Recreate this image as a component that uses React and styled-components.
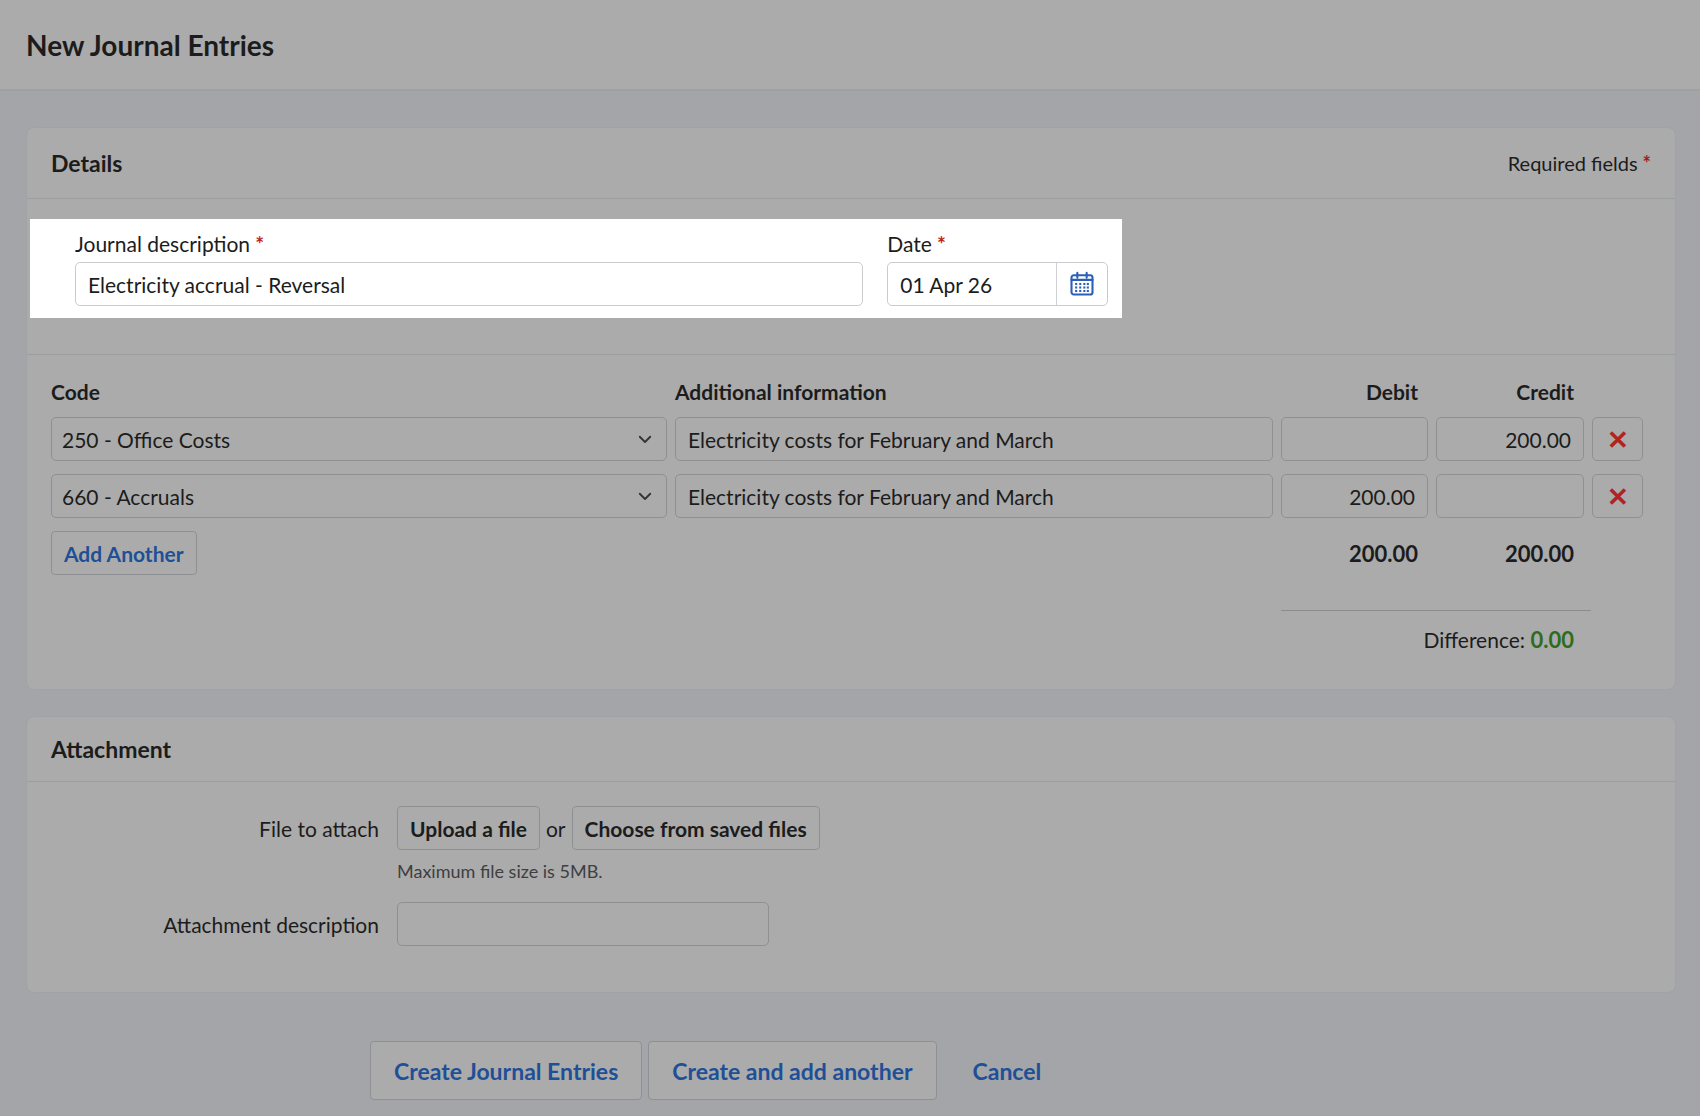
import styled, { createGlobalStyle } from "styled-components";

const Global = createGlobalStyle`
  body { margin: 0; background: #a3a5a8; font-family: "Lato", "Liberation Sans", sans-serif; color: #1c1c1c; }
  * { box-sizing: border-box; }
`;

const Header = styled.div`
  height: 91px; background: #ababab; border-bottom: 2px solid #9ea0a3;
  display: flex; align-items: center; padding: 0 26px;
  font-size: 28px; font-weight: 700;
`;

const Page = styled.div`
  padding: 36px 24px 20px 26px; display: flex; flex-direction: column; gap: 26px;
`;

const Card = styled.div`
  background: #ababab; border: 1px solid #a0a2a5; border-radius: 8px;
`;

const CardHead = styled.div`
  height: ${p => p.$h}px; display: flex; align-items: center; justify-content: space-between;
  padding: 0 24px; border-bottom: 1px solid #9c9ea1;
  font-size: 23px; font-weight: 700;
`;

const Req = styled.span`
  font-size: 20px; font-weight: 400;
  &::after { content: " *"; color: #a3201c; font-weight: 700; }
`;

const Highlight = styled.div`
  background: #fff; margin: 20px 0 0 -21px; width: 1092px; padding: 12px 14px 12px 45px;
  display: flex; gap: 24px;
`;

const Field = styled.div`
  display: flex; flex-direction: column; gap: 6px; width: ${p => p.$w}px;
`;

const Label = styled.label`
  font-size: 21px;
  &::after { content: ${p => (p.$req ? '" *"' : '""')}; color: #c0231e; font-weight: 700; }
`;

const Input = styled.div`
  height: 44px; border: 1px solid ${p => (p.$white ? "#c9cbcf" : "#8e9093")};
  border-radius: 5px; background: ${p => (p.$white ? "#fff" : "#ababab")};
  display: flex; align-items: center; padding: 0 12px; font-size: 21px;
  justify-content: ${p => (p.$right ? "flex-end" : "space-between")};
  width: ${p => (p.$w ? p.$w + "px" : "auto")};
`;

const DateBox = styled(Input)`padding: 0 0 0 12px;`;
const CalBtn = styled.div`
  width: 51px; height: 100%; border-left: 1px solid #d0d2d6;
  display: flex; align-items: center; justify-content: center;
`;

const Section = styled.div`
  border-top: 1px solid #9c9ea1; margin-top: 36px; padding: 24px 24px 36px;
`;

const Grid = styled.div`
  display: grid; grid-template-columns: 616px 598px 147px 148px 51px;
  column-gap: 8px; row-gap: 13px; align-items: center;
`;

const Th = styled.div`
  font-size: 21px; font-weight: 700; text-align: ${p => (p.$right ? "right" : "left")};
  padding-right: ${p => (p.$right ? "10px" : 0)};
`;

const XBtn = styled.div`
  height: 44px; border: 1px solid #8e9093; border-radius: 5px;
  display: flex; align-items: center; justify-content: center;
  color: #b0231f; font-size: 26px; font-weight: 700;
`;

const Btn = styled.div`
  height: ${p => p.$h || 44}px; border: 1px solid #8e9093; border-radius: 4px;
  display: inline-flex; align-items: center; padding: 0 ${p => p.$px || 12}px;
  font-size: 21px; font-weight: 700; color: ${p => (p.$blue ? "#1f4f96" : "#1c1c1c")};
  background: #ababab;
`;

const Total = styled.div`font-size: 22px; font-weight: 700; text-align: right; padding-right: 10px;`;

const DiffLine = styled.div`
  grid-column: 3 / 6; border-top: 1px solid #8a8c8f; margin-top: 22px; margin-right: 0; width: 310px;
`;
const Diff = styled.div`
  grid-column: 2 / 5; text-align: right; font-size: 21px; padding-right: 10px; margin-top: 2px;
  span { color: #2f6d1c; font-weight: 700; font-size: 22px; }
`;

const AttachBody = styled.div`
  display: grid; grid-template-columns: 328px auto; column-gap: 18px; row-gap: 0;
  padding: 24px 0 46px 24px; align-items: center;
`;
const RLabel = styled.div`text-align: right; font-size: 21px;`;
const Row = styled.div`display: flex; align-items: center; gap: 6px; font-size: 21px;`;
const Hint = styled.div`
  grid-column: 2; font-size: 18px; color: #3d3f42; margin: 10px 0 20px;
`;

const Actions = styled.div`
  display: flex; gap: 6px; align-items: center; padding-left: 344px; margin-top: 22px;
`;
const Link = styled.div`font-size: 23px; font-weight: 700; color: #1f4f96; margin-left: 30px;`;

const Chevron = () => (
  <svg width="18" height="18" viewBox="0 0 24 24" fill="none" stroke="#333" strokeWidth="2.4" strokeLinecap="round" strokeLinejoin="round"><path d="M5 9l7 7 7-7" /></svg>
);

const Calendar = () => (
  <svg width="28" height="28" viewBox="0 0 24 24" fill="none" stroke="#2b5fb8" strokeWidth="1.8">
    <rect x="3" y="4.5" width="18" height="16.5" rx="2" />
    <path d="M3 8.5h18M8 2.5v4M16 2.5v4" strokeLinecap="round" />
    {[7, 10.5, 14, 17].map(x => [12, 15, 18].map(y => <rect key={x + "-" + y} x={x - 0.9} y={y - 0.9} width="1.8" height="1.8" fill="#2b5fb8" stroke="none" />))}
  </svg>
);

const lines = [
  { code: "250 - Office Costs", debit: "", credit: "200.00" },
  { code: "660 - Accruals", debit: "200.00", credit: "" },
];

export default function App() {
  return (
    <>
      <Global />
      <Header>New Journal Entries</Header>
      <Page>
        <Card>
          <CardHead $h={71}>Details<Req>Required fields</Req></CardHead>
          <div style={{ paddingLeft: 24 }}>
            <Highlight>
              <Field $w={789}>
                <Label $req>Journal description</Label>
                <Input $white>Electricity accrual - Reversal</Input>
              </Field>
              <Field $w={221}>
                <Label $req>Date</Label>
                <DateBox $white>01 Apr 26<CalBtn><Calendar /></CalBtn></DateBox>
              </Field>
            </Highlight>
          </div>
          <Section>
            <Grid>
              <Th>Code</Th>
              <Th>Additional information</Th>
              <Th $right>Debit</Th>
              <Th $right>Credit</Th>
              <div />
              {lines.map(l => (
                <>
                  <Input key={l.code} style={{ paddingLeft: 10 }}>{l.code}<Chevron /></Input>
                  <Input>Electricity costs for February and March</Input>
                  <Input $right>{l.debit}</Input>
                  <Input $right>{l.credit}</Input>
                  <XBtn>✕</XBtn>
                </>
              ))}
              <div><Btn $blue>Add Another</Btn></div>
              <div />
              <Total>200.00</Total>
              <Total>200.00</Total>
              <div />
              <div /><div />
              <DiffLine />
              <div />
              <Diff>Difference: <span>0.00</span></Diff>
            </Grid>
          </Section>
        </Card>
        <Card>
          <CardHead $h={65}>Attachment</CardHead>
          <AttachBody>
            <RLabel>File to attach</RLabel>
            <Row><Btn>Upload a file</Btn>or<Btn>Choose from saved files</Btn></Row>
            <Hint>Maximum file size is 5MB.</Hint>
            <RLabel>Attachment description</RLabel>
            <Input $w={372} />
          </AttachBody>
        </Card>
        <Actions>
          <Btn $blue $h={59} $px={23} style={{ fontSize: 23 }}>Create Journal Entries</Btn>
          <Btn $blue $h={59} $px={23} style={{ fontSize: 23 }}>Create and add another</Btn>
          <Link>Cancel</Link>
        </Actions>
      </Page>
    </>
  );
}
